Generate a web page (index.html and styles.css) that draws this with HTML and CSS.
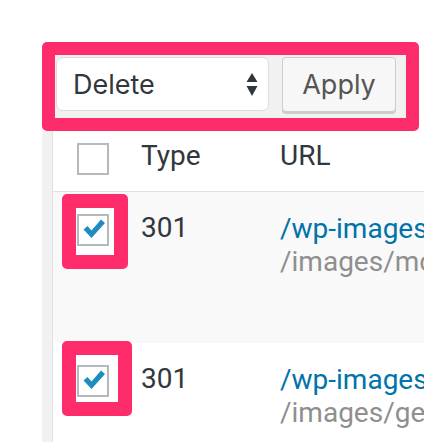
FILE: index.html
```html
<!DOCTYPE html>
<html lang="en">
<head>
    <meta charset="UTF-8">
    <meta name="viewport" content="width=device-width, initial-scale=1.0">
    <title>Redirections</title>
    <link rel="stylesheet" href="styles.css">
</head>
<body>
    <div class="wrap">
        <div class="tablenav">
            <div class="select">
                <span>Delete</span>
                <svg class="arrows" width="12" height="24" viewBox="0 0 12 24">
                    <path d="M6 0 L11.5 9 L0.5 9 Z" fill="#32373c"/>
                    <path d="M0.5 13 L11.5 13 L6 23 Z" fill="#32373c"/>
                </svg>
            </div>
            <button class="apply">Apply</button>
        </div>

        <div class="list">
            <div class="table">
                <div class="row head">
                    <div class="cell check"><span class="box"></span></div>
                    <div class="cell">Type</div>
                    <div class="cell">URL</div>
                </div>

                <div class="row alt">
                    <div class="cell check">
                        <span class="mark mark-a"></span>
                        <span class="box">
                            <svg width="28" height="28" viewBox="0 0 28 28">
                                <path d="M4.5 13.5 L8.5 10 L12.5 14.5 L22 3.5 L26 7 L12.5 22 Z" fill="#1e8cbe"/>
                            </svg>
                        </span>
                    </div>
                    <div class="cell">301</div>
                    <div class="cell url">
                        <a href="#">/wp-images/motorcycle-rally.jpg</a>
                        <span class="target">/images/motorcycle-rally.jpg</span>
                    </div>
                </div>

                <div class="row">
                    <div class="cell check">
                        <span class="mark mark-b"></span>
                        <span class="box">
                            <svg width="28" height="28" viewBox="0 0 28 28">
                                <path d="M4.5 13.5 L8.5 10 L12.5 14.5 L22 3.5 L26 7 L12.5 22 Z" fill="#1e8cbe"/>
                            </svg>
                        </span>
                    </div>
                    <div class="cell">301</div>
                    <div class="cell url">
                        <a href="#">/wp-images/general-store.jpg</a>
                        <span class="target">/images/general-store.jpg</span>
                    </div>
                </div>
            </div>
        </div>
    </div>
</body>
</html>
```

FILE: styles.css
```css
body {
    margin: 0;
    background: #fff;
    font-family: Inter, "Noto Sans", sans-serif;
    color: #32373c;
    overflow: hidden;
}

.wrap {
    padding: 42px 0 0 42px;
}

/* bulk actions bar, outlined in pink */
.tablenav {
    width: 350px;
    height: 61px;
    border: 13px solid #fe2c6a;
    border-radius: 5px;
    background: #f1f1f1;
    padding: 2px 0 0 1px;
    box-sizing: content-box;
    display: flex;
    align-items: flex-start;
    gap: 13px;
}

.select {
    width: 213px;
    height: 54px;
    box-sizing: border-box;
    background: #fff;
    border: 1px solid #dcdcdc;
    border-radius: 6px;
    padding: 0 10px 0 16px;
    display: flex;
    justify-content: space-between;
    align-items: center;
    font-size: 27px;
}

.arrows {
    margin-top: 1px;
}

.apply {
    width: 114px;
    height: 55px;
    background: #f7f7f7;
    border: 1px solid #ccc;
    border-radius: 4px;
    box-shadow: 0 2px 0 #ccc;
    font-family: inherit;
    font-size: 27px;
    color: #555;
    padding: 0;
}

/* list table */
.list {
    background: #f1f1f1;
    padding-left: 10px;
}

.table {
    width: 420px;
    background: #fff;
    border-left: 1px solid #e2e2e2;
}

.row {
    display: grid;
    grid-template-columns: 88px 139px 1fr;
    height: 151px;
    padding-top: 20px;
    box-sizing: border-box;
    font-family: Roboto, Inter, sans-serif;
    font-size: 28px;
    line-height: 32px;
}

.row.head {
    height: 61px;
    padding-top: 9px;
    border-bottom: 1px solid #e1e1e1;
}

.row.alt {
    background: #f9f9f9;
}

.cell {
    white-space: nowrap;
}

.check {
    position: relative;
    padding-left: 24px;
}

.box {
    position: relative;
    z-index: 1;
    display: flex;
    align-items: center;
    justify-content: center;
    width: 32px;
    height: 32px;
    box-sizing: border-box;
    border: 2px solid #b4b9be;
    background: #fff;
    margin-top: 2px;
}

.head .box {
    margin-top: 3px;
}

/* pink annotation around the ticked boxes */
.mark {
    position: absolute;
    left: 9px;
    height: 75px;
    box-sizing: border-box;
    border: 14px solid #fe2c6a;
    border-radius: 5px;
    background: #fff;
}

.mark-a {
    top: -18px;
    width: 66px;
}

.mark-b {
    top: -22px;
    width: 70px;
}

.url {
    display: flex;
    flex-direction: column;
    line-height: 33px;
}

.url a {
    color: #0073aa;
    text-decoration: none;
}

.target {
    color: #8f8f8f;
}
```
